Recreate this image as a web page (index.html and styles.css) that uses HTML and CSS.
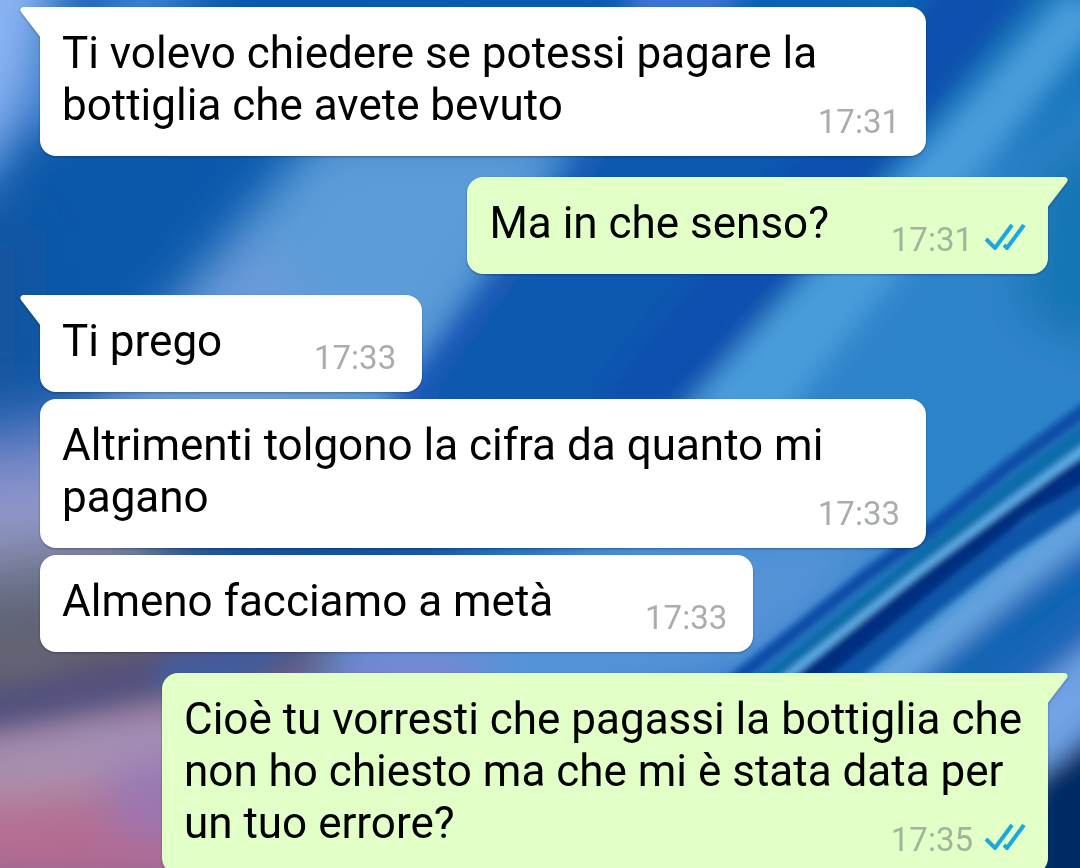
FILE: index.html
```html
<!DOCTYPE html>
<html lang="it">
<head>
    <meta charset="utf-8">
    <meta name="viewport" content="width=device-width, initial-scale=1">
    <title>Chat</title>
    <link rel="stylesheet" href="styles.css">
</head>
<body>
    <svg class="wallpaper" viewBox="0 0 1080 868" preserveAspectRatio="none" aria-hidden="true">
        <defs>
            <linearGradient id="base" x1="0" y1="0" x2="1" y2="0">
                <stop offset="0" stop-color="#0b57a8"/>
                <stop offset="0.6" stop-color="#0a5bb2"/>
                <stop offset="1" stop-color="#0f70b6"/>
            </linearGradient>
            <linearGradient id="corner" gradientUnits="userSpaceOnUse" x1="0" y1="380" x2="60" y2="868">
                <stop offset="0" stop-color="#1c5ca6" stop-opacity="0"/>
                <stop offset="0.13" stop-color="#5f7cc2"/>
                <stop offset="0.25" stop-color="#9298cf"/>
                <stop offset="0.33" stop-color="#8f93b8"/>
                <stop offset="0.39" stop-color="#68728a"/>
                <stop offset="0.58" stop-color="#5f5d6e"/>
                <stop offset="0.66" stop-color="#644e70"/>
                <stop offset="0.71" stop-color="#7c6590"/>
                <stop offset="0.76" stop-color="#aa91b2"/>
                <stop offset="0.81" stop-color="#b58b9c"/>
                <stop offset="0.88" stop-color="#b46e94"/>
                <stop offset="1" stop-color="#b46a90"/>
            </linearGradient>
            <filter id="blur4" x="-20%" y="-20%" width="140%" height="140%"><feGaussianBlur stdDeviation="3"/></filter>
            <filter id="blur12" x="-30%" y="-30%" width="160%" height="160%"><feGaussianBlur stdDeviation="12"/></filter>
            <filter id="blur24" x="-50%" y="-50%" width="200%" height="200%"><feGaussianBlur stdDeviation="24"/></filter>
        </defs>
        <rect width="1080" height="868" fill="url(#base)"/>

        <!-- wide bands of light -->
        <g filter="url(#blur24)">
            <path d="M-60-60H70L40 70L-10 180H-60Z" fill="#88b2f2"/>
            <path d="M130-40H230L60 130H20Z" fill="#3f84d8"/>
            <path d="M320 130L590 130L390 440L40 470L150 330Z" fill="#5c9cd8"/>
            <path d="M150 330L260 230L330 330L340 440H60Z" fill="#6b9ad8"/>
            <path d="M-60 230H30L30 400H-60Z" fill="#17559f"/>
            <path d="M950 180L1140 60V500L700 700L480 720L480 620L700 400Z" fill="#2f84ca"/>
            <path d="M1030 180L1140 100V360L1020 320Z" fill="#1474b4"/>
            <path d="M250 640L480 560L900 520L760 680L600 720L250 720Z" fill="#5493d8"/>
            <path d="M340 650H480V720H320Z" fill="#7c86d2"/>
        </g>
        <g filter="url(#blur12)">
            <path d="M600 140L640 140L450 420H380Z" fill="#2259bb"/>
            <path d="M610 140H900L680 410H410Z" fill="#0b59b0"/>
            <path d="M940-20H1040L690 405H590Z" fill="#0e4fae"/>
            <path d="M1065-10L1115 10L780 420H675Z" fill="#4a9cda"/>
            <path d="M640-30H760L720 20H620Z" fill="#3f74d8"/>
            <path d="M130 545H500L380 570L180 580Z" fill="#1d5099"/>
        </g>

        <!-- lower left haze -->
        <path d="M-60 370L60 390L150 420L150 540L230 590L340 640L200 900H-60Z" fill="url(#corner)" filter="url(#blur24)"/>
        <g filter="url(#blur12)">
            <path d="M-30 625L90 610L60 670L-30 690Z" fill="#626474"/>
            <path d="M-30 690Q100 680 250 630L300 655Q140 705 -30 732Z" fill="#50507c"/>
            <path d="M170 650L320 640L240 690H150Z" fill="#3f5c9e"/>
        </g>
        <g filter="url(#blur24)">
            <path d="M-30 755Q80 730 210 710V760L-30 785Z" fill="#a594ba"/>
            <path d="M100 770L230 740V840L120 840Z" fill="#9a76b2"/>
        </g>

        <!-- thin streaks on the right -->
        <g filter="url(#blur12)">
            <path d="M1120 500L1120 900H780L870 665Z" fill="#1b66b8"/>
            <path d="M1120 620L1120 700L1020 800V700Z" fill="#70a2e4"/>
            <path d="M1120 715L1030 780V900H1120Z" fill="#052964"/>
            <path d="M1140 478L1007 579L933 640L830 726" fill="none" stroke="#68a6e2" stroke-width="38"/>
            <path d="M1140 535L1050 605L970 665L900 720" fill="none" stroke="#0f64b2" stroke-width="30"/>
        </g>
        <g filter="url(#blur4)" fill="none">
            <path d="M1100 399L1007 467L933 527L863 578L725 688" stroke="#0a4da8" stroke-width="14"/>
            <path d="M1100 420L1007 489L920 557L750 693" stroke="#0a6cab" stroke-width="16"/>
            <path d="M1100 484L1007 545L933 602L835 684" stroke="#0b54a8" stroke-width="22"/>
            <path d="M1100 460L1020 508L933 577L785 698" stroke="#052f80" stroke-width="22"/>
            <path d="M1100 438L1000 511L917 573L770 690" stroke="#62b2ec" stroke-width="7"/>
        </g>
    </svg>

    <main class="chat">
        <div class="message received first">
            <svg class="tail" viewBox="0 0 21 32" aria-hidden="true"><path d="M21 0H3Q-1 1 1 5L21 31Z"/></svg>
            <p>Ti volevo chiedere se potessi pagare la bottiglia che avete bevuto</p>
            <div class="meta"><time>17:31</time></div>
        </div>

        <div class="message sent first">
            <svg class="tail" viewBox="0 0 21 32" aria-hidden="true"><path d="M0 0H18Q22 1 20 5L0 31Z"/></svg>
            <p>Ma in che senso?</p>
            <div class="meta">
                <time>17:31</time>
                <svg class="ticks" viewBox="0 0 42 28" role="img" aria-label="Letto"><path d="M2 17L11 26L28 3M20 23L23 26L40 3"/></svg>
            </div>
        </div>

        <div class="message received first">
            <svg class="tail" viewBox="0 0 21 32" aria-hidden="true"><path d="M21 0H3Q-1 1 1 5L21 31Z"/></svg>
            <p>Ti prego</p>
            <div class="meta"><time>17:33</time></div>
        </div>

        <div class="message received">
            <p>Altrimenti tolgono la cifra da quanto mi pagano</p>
            <div class="meta"><time>17:33</time></div>
        </div>

        <div class="message received">
            <p>Almeno facciamo a metà</p>
            <div class="meta"><time>17:33</time></div>
        </div>

        <div class="message sent first">
            <svg class="tail" viewBox="0 0 21 32" aria-hidden="true"><path d="M0 0H18Q22 1 20 5L0 31Z"/></svg>
            <p>Cioè tu vorresti che pagassi la bottiglia che non ho chiesto ma che mi è stata data per un tuo errore?</p>
            <div class="meta">
                <time>17:35</time>
                <svg class="ticks" viewBox="0 0 42 28" role="img" aria-label="Letto"><path d="M2 17L11 26L28 3M20 23L23 26L40 3"/></svg>
            </div>
        </div>
    </main>
</body>
</html>
```
FILE: styles.css
```css
body {
    margin: 0;
    background-color: #0b57a8;
    color: #000;
    font-family: Roboto, "Liberation Sans", sans-serif;
    font-size: 44px;
    line-height: 52px;
}

.wallpaper {
    position: fixed;
    top: 0;
    left: 0;
    width: 100%;
    height: 100%;
    z-index: -1;
}

.chat {
    display: flex;
    flex-direction: column;
    gap: 7px;
    padding: 7px 32px 7px 40px;
}

.message {
    position: relative;
    display: grid;
    box-sizing: border-box;
    max-width: calc(100% - 122px);
    padding: 20px 22px 14px;
    border-radius: 16px;
    filter: drop-shadow(0 1px 1px rgba(0, 0, 0, 0.3));
}

.first + .first,
.received + .sent {
    margin-top: 14px;
}

.received {
    align-self: flex-start;
    background-color: #fff;
    fill: #fff;
}

.sent {
    align-self: flex-end;
    background-color: #e1ffc7;
    fill: #e1ffc7;
}

.received.first {
    border-top-left-radius: 0;
}

.sent.first {
    border-top-right-radius: 0;
}

.tail {
    position: absolute;
    top: 0;
    width: 21px;
    height: 32px;
}

.received .tail {
    right: calc(100% - 1px);
}

.sent .tail {
    left: calc(100% - 1px);
}

.message p,
.meta {
    grid-area: 1 / 1;
}

.message p {
    margin: 0 0 11px;
}

/* keeps room for the time on the last line */
.message p::after {
    content: "";
    display: inline-block;
    width: 178px;
}

.sent p::after {
    width: 197px;
}

.meta {
    display: flex;
    align-items: center;
    gap: 11px;
    align-self: end;
    justify-self: end;
    color: #a9adaf;
    font-size: 33px;
    line-height: 40px;
}

.received .meta {
    margin-right: 4px;
}

.sent .meta {
    color: #a5b29b;
}

.ticks {
    width: 42px;
    height: 28px;
    padding-bottom: 8px;
    fill: none;
    stroke: #1ba8e0;
    stroke-width: 4;
}
```
